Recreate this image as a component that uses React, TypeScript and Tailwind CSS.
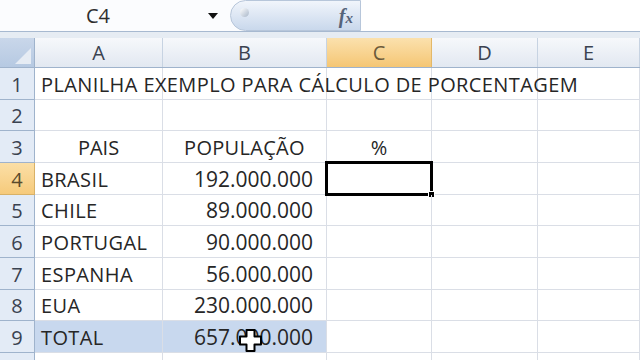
import React from "react";

// --- Sheet data ---------------------------------------------------------------

type Row = {
  n: number;
  h: string;
  a?: string;
  b?: string;
  c?: string;
  center?: boolean;
};

const ROWS: Row[] = [
  { n: 1, h: "h-[32px]", a: "PLANILHA EXEMPLO PARA CÁLCULO DE PORCENTAGEM" },
  { n: 2, h: "h-[31px]" },
  { n: 3, h: "h-[32px]", a: "PAIS", b: "POPULAÇÃO", c: "%", center: true },
  { n: 4, h: "h-[32px]", a: "BRASIL", b: "192.000.000" },
  { n: 5, h: "h-[31px]", a: "CHILE", b: "89.000.000" },
  { n: 6, h: "h-[32px]", a: "PORTUGAL", b: "90.000.000" },
  { n: 7, h: "h-[32px]", a: "ESPANHA", b: "56.000.000" },
  { n: 8, h: "h-[31px]", a: "EUA", b: "230.000.000" },
  { n: 9, h: "h-[32px]", a: "TOTAL", b: "657.000.000" },
  // row 10 only peeks in at the bottom edge, its number is below the fold
  { n: 10, h: "h-[32px]" },
];

const COLS = [
  { key: "A", w: "w-[128px]" },
  { key: "B", w: "w-[164px]" },
  { key: "C", w: "w-[105px]" },
  { key: "D", w: "w-[106px]" },
  { key: "E", w: "flex-1" },
];

// --- Formula bar --------------------------------------------------------------

function FormulaBar() {
  return (
    <div className="flex h-[31px] bg-[#fbfcfe]">
      <div className="flex w-[196px] items-center justify-center text-[20px] text-[#2e2e2e]">
        C4
      </div>
      <div className="flex w-[34px] items-center justify-center">
        <svg width="10" height="6" viewBox="0 0 10 6">
          <path d="M0 0 H10 L5 6 Z" fill="#111" />
        </svg>
      </div>
      <div className="relative flex w-[131px] items-center justify-end rounded-bl-[16px] rounded-tl-[16px] border border-[#b7c6da] bg-gradient-to-b from-[#f1f5fb] to-[#c9d8ec] pr-[7px]">
        <div className="absolute left-[9px] top-[7px] h-[9px] w-[9px] rounded-full bg-gradient-to-br from-[#ffffff] to-[#a9b7c9]" />
        <span className="font-['Liberation_Serif'] text-[20px] font-bold italic text-[#55637a]">
          f<span className="text-[15px]">x</span>
        </span>
      </div>
      <div className="flex-1 bg-white" />
    </div>
  );
}

// --- Column header ------------------------------------------------------------

function ColumnHeader() {
  return (
    <div className="flex h-[30px] border-b border-[#9fb3cc]">
      <div className="relative w-[35px] border-r border-[#9fb3cc] bg-gradient-to-b from-[#c9d7ea] to-[#b6c9e2]">
        <svg className="absolute bottom-[3px] right-[3px]" width="16" height="16" viewBox="0 0 16 16">
          <path d="M16 0 V16 H0 Z" fill="#e6ecf4" />
        </svg>
      </div>
      {COLS.map((c) => (
        <div
          key={c.key}
          className={
            c.key === "C"
              ? `${c.w} flex items-center justify-center border-r border-[#e3b868] bg-gradient-to-b from-[#fbe1ad] to-[#f5c673] pt-[1px] text-[20px] text-[#6b5a3a]`
              : `${c.w} flex items-center justify-center border-r border-[#c7d3e2] bg-gradient-to-b from-[#f6f8fb] to-[#e2e8f1] pt-[1px] text-[20px] text-[#3a4250]`
          }
        >
          {c.key}
        </div>
      ))}
    </div>
  );
}

// --- Sheet row ----------------------------------------------------------------

function SheetRow({ row }: { row: Row }) {
  const active = row.n === 4;
  const total = row.n === 9;
  const cellBase = "border-b border-r border-[#dadee6] flex items-center pt-[2px]";
  return (
    <div className={`flex ${row.h}`}>
      <div
        className={
          active
            ? "flex w-[35px] items-center justify-center border-b border-r border-[#d8b167] bg-gradient-to-b from-[#fbdfa6] to-[#f6ca7b] pt-[2px] text-[20px] text-[#5a4a2c]"
            : "flex w-[35px] items-center justify-center border-b border-r border-[#9fb3cc] bg-[#e3ebf6] pt-[2px] text-[20px] text-[#3a4250]"
        }
      >
        {row.n < 10 ? row.n : ""}
      </div>
      {/* A */}
      <div
        className={`w-[128px] ${cellBase} ${row.center ? "justify-center" : "pl-[6px] tracking-[0.4px]"} ${total ? "bg-[#c8d8ee]" : ""} relative z-10 overflow-visible whitespace-nowrap`}
      >
        {row.a}
      </div>
      {/* B */}
      <div
        className={`w-[164px] ${cellBase} ${row.center ? "justify-center tracking-[0.3px]" : "justify-end pr-[13px] text-[21px]"} ${total ? "bg-[#c8d8ee]" : "bg-white"}`}
      >
        {row.b}
      </div>
      {/* C */}
      <div className={`relative w-[105px] ${cellBase} justify-center`}>
        {row.c}
        {active && (
          <div className="absolute -left-[2px] -top-[2px] h-[35px] w-[108px] border-[3px] border-black">
            <div className="absolute -bottom-[5px] -right-[5px] h-[7px] w-[7px] border border-white bg-black" />
          </div>
        )}
      </div>
      <div className={`w-[106px] ${cellBase}`} />
      <div className={`flex-1 ${cellBase}`} />
    </div>
  );
}

// --- App ----------------------------------------------------------------------

export default function App() {
  return (
    <div className="relative h-[360px] w-[640px] overflow-hidden bg-white font-['Open_Sans',sans-serif] text-[20px] text-[#262626]">
      <FormulaBar />
      <div className="h-[1px] bg-[#a7b9d0]" />
      <div className="h-[6px] bg-[#e6ecf3]" />
      <ColumnHeader />
      <div className="relative">
        {ROWS.map((r) => (
          <SheetRow key={r.n} row={r} />
        ))}
      </div>

      {/* mouse cursor over the total */}
      <svg
        className="absolute left-[239px] top-[329px]"
        width="23"
        height="23"
        viewBox="0 0 23 23"
      >
        <path
          d="M7.5 1 H15.5 V7.5 H22 V15.5 H15.5 V22 H7.5 V15.5 H1 V7.5 H7.5 Z"
          fill="#fff"
          stroke="#000"
          strokeWidth="2"
          strokeLinejoin="round"
        />
      </svg>
    </div>
  );
}
